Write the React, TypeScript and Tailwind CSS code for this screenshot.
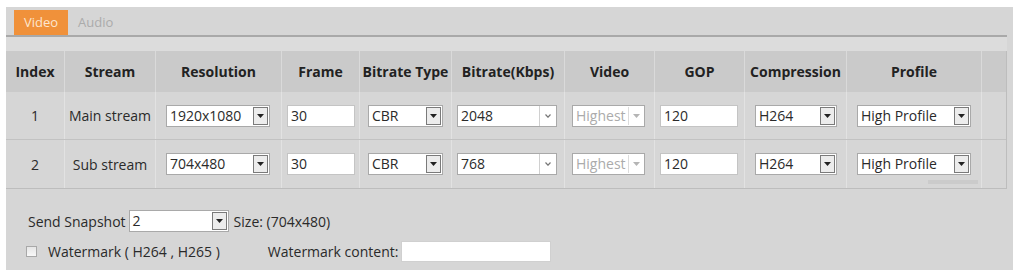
import React from "react";

const font = { fontFamily: '"Open Sans", "Noto Sans", sans-serif' };

function Arrow({ light }: { light?: boolean }) {
  return (
    <svg width="7" height="4" viewBox="0 0 7 4">
      <path d="M0 0 L7 0 L3.5 4 Z" fill={light ? "#b5b5b5" : "#222"} />
    </svg>
  );
}

function Select({ value, w, kind = "box", disabled }: { value: string; w: string; kind?: "box" | "combo"; disabled?: boolean }) {
  return (
    <div className={`flex h-[22px] ${w} border border-[#a9a9a9] bg-white`}>
      <div className={`flex-1 overflow-hidden whitespace-nowrap pl-[3px] leading-[20px] ${disabled ? "text-[#ababab]" : "text-[#2a2a2a]"}`}>{value}</div>
      {kind === "box" && !disabled && (
        <div className="my-[1px] mr-[1px] flex w-[15px] shrink-0 items-center justify-center border border-[#7a7a7a] bg-[#ececec]">
          <Arrow />
        </div>
      )}
      {kind === "box" && disabled && (
        <div className="my-[1px] mr-[1px] flex w-[15px] shrink-0 items-center justify-center border-l border-[#dcdcdc] bg-white">
          <Arrow light />
        </div>
      )}
      {kind === "combo" && (
        <div className="flex w-[17px] shrink-0 items-center justify-center border-l border-[#d0d0d0] bg-white">
          <svg width="6" height="4" viewBox="0 0 6 4">
            <path d="M0.5 0.5 L3 3.2 L5.5 0.5" stroke="#777" strokeWidth="1.2" fill="none" />
          </svg>
        </div>
      )}
    </div>
  );
}

function Input({ value, w }: { value: string; w: string }) {
  return <div className={`h-[22px] ${w} border border-[#c4c4c4] bg-white pl-[3px] leading-[20px] text-[#2a2a2a]`}>{value}</div>;
}

const widths = ["w-[59px]", "w-[91px]", "w-[126px]", "w-[78px]", "w-[92px]", "w-[113px]", "w-[90px]", "w-[90px]", "w-[102px]", "w-[135px]", "w-[24px]"];
const heads = ["Index", "Stream", "Resolution", "Frame", "Bitrate Type", "Bitrate(Kbps)", "Video", "GOP", "Compression", "Profile", ""];

function Row({ idx, stream, res, bitrate, last }: { idx: string; stream: string; res: string; bitrate: string; last?: boolean }) {
  const cell = "flex h-full items-center border-r border-[#e2e2e2]";
  return (
    <div className={`flex h-[48px] ${last ? "" : "border-b border-[#c2c2c2]"}`}>
      <div className={`${cell} ${widths[0]} justify-center text-[#2a2a2a]`}>{idx}</div>
      <div className={`${cell} ${widths[1]} justify-center whitespace-nowrap text-[#2a2a2a]`}>{stream}</div>
      <div className={`${cell} ${widths[2]} pl-[10px]`}><Select value={res} w="w-[104px]" /></div>
      <div className={`${cell} ${widths[3]} pl-[5px]`}><Input value="30" w="w-[68px]" /></div>
      <div className={`${cell} ${widths[4]} pl-[8px]`}><Select value="CBR" w="w-[75px]" /></div>
      <div className={`${cell} ${widths[5]} pl-[5px]`}><Select value={bitrate} w="w-[100px]" kind="combo" /></div>
      <div className={`${cell} ${widths[6]} pl-[7px]`}><Select value="Highest" w="w-[73px]" disabled /></div>
      <div className={`${cell} ${widths[7]} pl-[5px]`}><Input value="120" w="w-[78px]" /></div>
      <div className={`${cell} ${widths[8]} pl-[10px]`}><Select value="H264" w="w-[82px]" /></div>
      <div className={`${cell} ${widths[9]} pl-[10px]`}><Select value="High Profile" w="w-[114px]" /></div>
      <div className={`h-full ${widths[10]}`}></div>
    </div>
  );
}

export default function App() {
  return (
    <div className="h-[277px] w-[1019px] bg-white pl-[6px] pt-[7px] text-[14px]" style={font}>
      <div className="h-[263px] w-[1007px] bg-[#d6d6d6]">
        <div className="flex h-[28px] items-end pl-[8px]">
          <div className="flex h-[25px] w-[54px] items-center justify-center bg-[#f0913a] text-[13px] text-[#fde6cf]">Video</div>
          <div className="flex h-[25px] items-center pl-[10px] text-[13px] text-[#ababab]">Audio</div>
        </div>
        <div className="h-[2px] w-[1001px] bg-[#a9a9a9]"></div>
        <div className="h-[14px] w-[1001px] bg-[#dcdcdc]"></div>
        <div className="relative w-[1001px] border-r border-b border-[#bdbdbd]">
          <div className="flex h-[41px] bg-[#cacaca] font-bold text-[#222]">
            {heads.map((h, i) => (
              <div key={i} className={`flex h-full items-center justify-center whitespace-nowrap ${widths[i]} ${i < 10 ? "border-r border-[#dadada]" : ""}`}>{h}</div>
            ))}
          </div>
          <Row idx="1" stream="Main stream" res="1920x1080" bitrate="2048" />
          <Row idx="2" stream="Sub stream" res="704x480" bitrate="768" last />
          <div className="absolute left-[922px] top-[129px] h-[4px] w-[50px] bg-[#cbcbcb]"></div>
        </div>
        <div className="mt-[21px] flex items-center pl-[22px] text-[#2a2a2a]">
          <span className="mr-[3px]">Send Snapshot</span>
          <Select value="2" w="w-[100px]" />
          <span className="ml-[5px]">Size: (704x480)</span>
        </div>
        <div className="mt-[9px] flex items-center pl-[20px] text-[#2a2a2a]">
          <div className="h-[11px] w-[11px] border border-[#a8a8a8] bg-gradient-to-b from-[#e6e6e6] to-[#f8f8f8]"></div>
          <span className="ml-[11px]">Watermark ( H264 , H265 )</span>
          <span className="ml-[48px]">Watermark content:</span>
          <div className="ml-[3px] h-[21px] w-[150px] border border-[#d0d0d0] bg-white"></div>
        </div>
      </div>
    </div>
  );
}
